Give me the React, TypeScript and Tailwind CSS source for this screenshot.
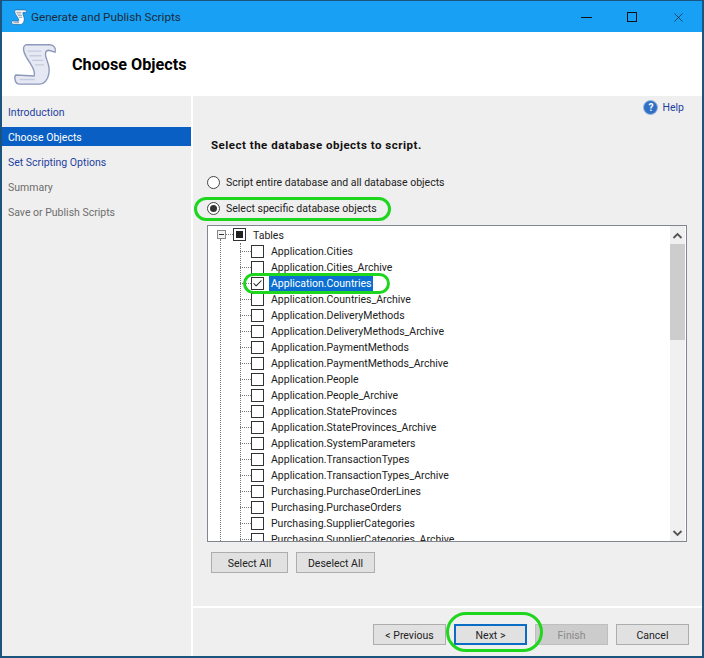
import React from 'react';
import { Check, X } from 'lucide-react';

const tables = [
  'Application.Cities',
  'Application.Cities_Archive',
  'Application.Countries',
  'Application.Countries_Archive',
  'Application.DeliveryMethods',
  'Application.DeliveryMethods_Archive',
  'Application.PaymentMethods',
  'Application.PaymentMethods_Archive',
  'Application.People',
  'Application.People_Archive',
  'Application.StateProvinces',
  'Application.StateProvinces_Archive',
  'Application.SystemParameters',
  'Application.TransactionTypes',
  'Application.TransactionTypes_Archive',
  'Purchasing.PurchaseOrderLines',
  'Purchasing.PurchaseOrders',
  'Purchasing.SupplierCategories',
  'Purchasing.SupplierCategories_Archive',
];

const ScrollIcon: React.FC<{ size: number; light?: boolean }> = ({ size, light }) => (
  <svg width={size} height={size} viewBox="0 0 48 48">
    <path
      d="M14 3 H40 C45 3 47 7 46 11 L39 9 C35 9 35 13 36 17 C38 23 41 28 39 35 C38 41 34 46 29 46 H7 C2 46 1 38 3 36 L23 37 C25 32 21 27 18 22 C14 16 8 6 14 3 Z"
      fill={light ? '#ffffff' : '#e6e9f3'}
      stroke={light ? '#27466b' : '#8d99bb'}
      strokeWidth="1.5"
    />
    <path d="M16 10 H31 M18 15 H31 M21 20 H33 M24 25 H34" stroke={light ? '#27466b' : '#c3cbde'} strokeWidth="1.5" />
    <path d="M7 41 H24" stroke={light ? '#27466b' : '#c3cbde'} strokeWidth="1.5" />
  </svg>
);

const NavItem: React.FC<{ label: string; state: 'link' | 'active' | 'muted' }> = ({ label, state }) => (
  <div
    className={`h-[19px] flex items-center pl-[6px] pt-[2px] mb-[6px] text-[10.5px] ${
      state === 'active' ? 'bg-[#0a5fc4] text-white' : state === 'link' ? 'text-[#1f3fa0]' : 'text-[#6d6d6d]'
    }`}
  >
    {label}
  </div>
);

const Radio: React.FC<{ on?: boolean; label: string }> = ({ on, label }) => (
  <div className="flex items-center gap-[6px] h-[16px] text-[10.5px] text-[#222]">
    <div className="w-[13px] h-[13px] rounded-full border border-[#444] bg-white flex items-center justify-center">
      {on && <div className="w-[7px] h-[7px] rounded-full bg-[#333]" />}
    </div>
    <span className="pt-[2px]">{label}</span>
  </div>
);

const TreeRow: React.FC<{ label: string; checked?: boolean }> = ({ label, checked }) => (
  <div className="h-[16px] flex items-center relative">
    <div className="w-[11px] border-t border-dotted border-[#777] ml-[32px]" />
    <div className="w-[13px] h-[13px] border border-[#333] bg-white flex items-center justify-center">
      {checked && <Check size={11} strokeWidth={2.2} className="text-[#222]" />}
    </div>
    <span
      className={`ml-[5px] px-[2px] h-[16px] leading-[18px] text-[10.5px] whitespace-nowrap ${
        checked ? 'bg-[#0a6fd0] text-white' : 'text-[#222]'
      }`}
    >
      {label}
    </span>
  </div>
);

const Btn: React.FC<{ label: string; variant?: 'default' | 'focus' | 'disabled'; className?: string }> = ({
  label,
  variant = 'default',
  className,
}) => (
  <div
    className={`h-[21px] flex items-center justify-center pt-[2px] text-[10.5px] ${
      variant === 'focus'
        ? 'border-2 border-[#0a6cc4] bg-[#e1e1e1] text-[#222]'
        : variant === 'disabled'
        ? 'border border-[#bfbfbf] bg-[#cccccc] text-[#8a8a8a]'
        : 'border border-[#adadad] bg-[#e1e1e1] text-[#222]'
    } ${className ?? ''}`}
  >
    {label}
  </div>
);

export default function App() {
  return (
    <div className="font-['Roboto',sans-serif] w-[704px] h-[658px] flex flex-col overflow-hidden bg-[#efefef] border-x-2 border-b-2 border-[#1c5480] relative">
      <div className="h-[32px] shrink-0 bg-[#18a0f5] flex items-center pl-[9px] pt-[1px] border-t border-[#1c5480]">
        <ScrollIcon size={16} light />
        <span className="ml-[4px] pt-[2px] text-[11.7px] text-[#1c2b3a]">Generate and Publish Scripts</span>
        <div className="ml-auto flex items-center pr-[1px]">
          <div className="w-[46px] flex justify-center">
            <div className="w-[11px] border-t border-[#111]" />
          </div>
          <div className="w-[46px] flex justify-center">
            <div className="w-[10px] h-[10px] border border-[#111]" />
          </div>
          <div className="w-[46px] flex justify-center">
            <X size={15} strokeWidth={1} className="text-[#111]" />
          </div>
        </div>
      </div>

      <div className="h-[64px] shrink-0 bg-white flex items-center pl-[11px]">
        <ScrollIcon size={44} />
        <span className="ml-[15px] mt-[3px] text-[16.2px] font-bold text-black">Choose Objects</span>
      </div>

      <div className="flex-1 flex min-h-0">
        <div className="w-[189px] shrink-0 bg-[#efefef] pt-[6px]">
          <NavItem label="Introduction" state="link" />
          <NavItem label="Choose Objects" state="active" />
          <NavItem label="Set Scripting Options" state="link" />
          <NavItem label="Summary" state="muted" />
          <NavItem label="Save or Publish Scripts" state="muted" />
        </div>

        <div className="flex-1 border-l-2 border-white flex flex-col min-w-0">
          <div className="flex-1 min-h-0 flex flex-col pl-[14px] pr-[5px]">
            <div className="h-[20px] mt-[1px] flex items-center justify-end gap-[4px] pr-[13px]">
              <div className="w-[15px] h-[15px] rounded-full bg-[#2f6fc4] border border-[#9ab8e0] text-white text-[10px] font-bold flex items-center justify-center">
                ?
              </div>
              <span className="pt-[2px] text-[10.5px] text-[#1f3fa0]">Help</span>
            </div>
            <div className="mt-[20px] ml-[4px] h-[18px] text-[11.5px] font-bold text-[#111] tracking-[0.5px]">
              Select the database objects to script.
            </div>
            <div className="mt-[19px]">
              <Radio label="Script entire database and all database objects" />
            </div>
            <div className="mt-[10px]">
              <Radio on label="Select specific database objects" />
            </div>
            <div className="mt-[9px] h-[317px] mr-[10px] border border-[#82878f] bg-white flex overflow-hidden">
              <div className="flex-1 min-w-0 overflow-hidden relative">
                <div className="absolute left-[12px] top-[13px] bottom-0 border-l border-dotted border-[#777]" />
                <div className="absolute left-[32px] top-[17px] bottom-0 border-l border-dotted border-[#777]" />
                <div className="h-[17px] flex items-center pl-[9px] relative">
                  <div className="w-[9px] h-[9px] border border-[#888] bg-[#f2f2f2] flex items-center justify-center">
                    <div className="w-[5px] border-t border-[#333]" />
                  </div>
                  <div className="w-[7px] border-t border-dotted border-[#777]" />
                  <div className="w-[13px] h-[13px] border border-[#333] bg-white flex items-center justify-center">
                    <div className="w-[7px] h-[7px] bg-[#222]" />
                  </div>
                  <span className="ml-[7px] pt-[2px] text-[10.5px] text-[#222]">Tables</span>
                </div>
                {tables.map((t) => (
                  <TreeRow key={t} label={t} checked={t === 'Application.Countries'} />
                ))}
              </div>
              <div className="w-[15px] mr-[1px] shrink-0 bg-[#f0f0f0] flex flex-col items-center">
                <svg className="shrink-0" width="15" height="18" viewBox="0 0 15 18">
                  <path d="M3.5 12 L7.5 8 L11.5 12" fill="none" stroke="#555" strokeWidth="1.8" />
                </svg>
                <div className="w-full h-[96px] bg-[#cdcdcd]" />
                <svg className="mt-auto shrink-0" width="15" height="17" viewBox="0 0 15 17">
                  <path d="M3.5 7 L7.5 11 L11.5 7" fill="none" stroke="#555" strokeWidth="1.8" />
                </svg>
              </div>
            </div>
            <div className="mt-[10px] flex gap-[8px] ml-[4px]">
              <Btn label="Select All" className="w-[77px]" />
              <Btn label="Deselect All" className="w-[79px]" />
            </div>
          </div>
          <div className="h-[50px] shrink-0 border-t-2 border-white flex items-start justify-end gap-[8px] pt-[16px] pr-[13px]">
            <Btn label="< Previous" className="w-[73px]" />
            <Btn label="Next >" variant="focus" className="w-[73px]" />
            <Btn label="Finish" variant="disabled" className="w-[73px]" />
            <Btn label="Cancel" className="w-[73px]" />
          </div>
        </div>
      </div>

      {/* green annotation marks drawn over the dialog */}
      <div className="absolute left-[192px] top-[197px] w-[197px] h-[24px] rounded-[12px] border-[3px] border-[#1fd61f]" />
      <div className="absolute left-[241px] top-[273px] w-[147px] h-[21px] rounded-[11px] border-[3px] border-[#1fd61f]" />
      <div className="absolute left-[444px] top-[612px] w-[97px] h-[40px] rounded-[20px] border-[3px] border-[#1fd61f]" />
    </div>
  );
}
